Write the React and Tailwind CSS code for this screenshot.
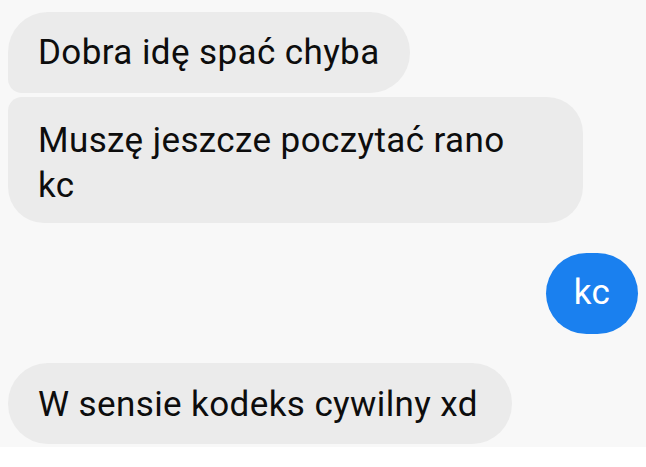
import React from 'react';

const Bubble = ({ children, className = '' }) => (
  <div className={`bg-[#ebebeb] text-[#0d0d0d] pl-[30px] pr-[20px] text-[35px] tracking-[0.4px] leading-[45px] ${className}`}>
    {children}
  </div>
);

export default function App() {
  return (
    <div className="w-[646px] h-[467px] bg-white" style={{ fontFamily: 'Roboto, "Liberation Sans", sans-serif' }}>
      <div className="bg-[#f8f8f8] h-[447px] pt-[12px] px-[8px] flex flex-col">
        <Bubble className="pt-[18px] w-[402px] h-[81px] rounded-tl-[40px] rounded-tr-[40px] rounded-br-[40px] rounded-bl-[14px]">
          Dobra idę spać chyba
        </Bubble>
        <Bubble className="pt-[21px] mt-[4px] w-[575px] h-[126px] rounded-tl-[14px] rounded-tr-[36px] rounded-br-[36px] rounded-bl-[36px]">
          Muszę jeszcze poczytać rano
          <br />
          kc
        </Bubble>
        <div className="mt-[30px] flex justify-end">
          <div className="w-[92px] h-[81px] rounded-full bg-[#1a80ef] text-white text-[35px] tracking-[0.4px] flex items-center justify-center">
            kc
          </div>
        </div>
        <Bubble className="pt-[19px] mt-[29px] w-[504px] h-[81px] rounded-[40px]">
          W sensie kodeks cywilny xd
        </Bubble>
      </div>
    </div>
  );
}
